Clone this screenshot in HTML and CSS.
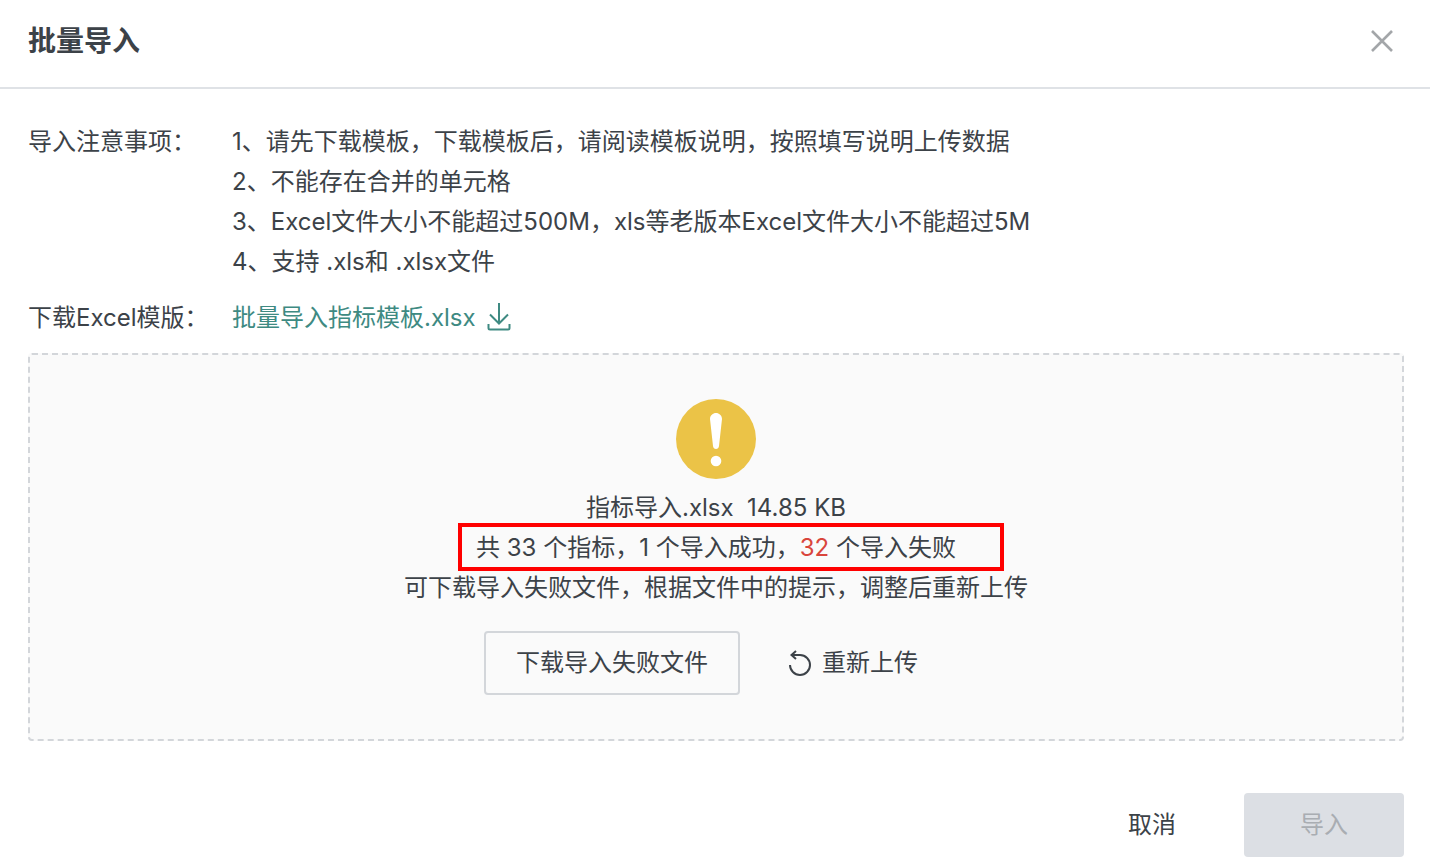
FILE: index.html
```html
<!DOCTYPE html>
<html>
<head>
  <title>批量导入</title>
  <meta charset="UTF-8">
  <link rel="stylesheet" href="styles.css">
</head>
<body>
  <div id="import-dialog">
    <div class="dialog-header">
      <h3>批量导入</h3>
      <svg class="close-icon" width="24" height="24" viewBox="0 0 24 24" fill="none" stroke="#a3a6a9" stroke-width="2.6">
        <path d="M2 2 L22 22 M22 2 L2 22"/>
      </svg>
    </div>

    <div class="dialog-body">
      <div class="info-row notes">
        <div class="info-label">导入注意事项：</div>
        <div class="info-value">
          <div>1、请先下载模板，下载模板后，请阅读模板说明，按照填写说明上传数据</div>
          <div>2、不能存在合并的单元格</div>
          <div>3、Excel文件大小不能超过500M，xls等老版本Excel文件大小不能超过5M</div>
          <div>4、支持 .xls和 .xlsx文件</div>
        </div>
      </div>
      <div class="info-row download">
        <div class="info-label">下载Excel模版：</div>
        <div class="info-value template-link">
          <span>批量导入指标模板.xlsx</span>
          <svg width="24" height="28" viewBox="0 0 24 28" fill="none" stroke="#3e8a82" stroke-width="2">
            <path d="M12 0 V20.5 M3 11.5 L12 20.5 L21 11.5"/>
            <path d="M1.5 21 V25 Q1.5 26.5 3 26.5 H21 Q22.5 26.5 22.5 25 V21"/>
          </svg>
        </div>
      </div>

      <div class="result-box">
        <svg class="warn-icon" width="80" height="80" viewBox="0 0 80 80">
          <circle cx="40" cy="40" r="40" fill="#ebc347"/>
          <path d="M34 20 C34 16.5 37 14 40 14 C43 14 46 16.5 46 20 L43 47 C42.8 49 41.6 50 40 50 C38.4 50 37.2 49 37 47 Z" fill="#fff"/>
          <circle cx="40" cy="62" r="5.3" fill="#fff"/>
        </svg>
        <div class="result-text">
          <div>指标导入.xlsx&nbsp;&nbsp;14.85 KB</div>
          <div class="summary">共 33 个指标，1 个导入成功，<span class="fail-count">32</span> 个导入失败<span class="red-frame"></span></div>
          <div>可下载导入失败文件，根据文件中的提示，调整后重新上传</div>
        </div>
        <div class="result-actions">
          <button class="btn-outline">下载导入失败文件</button>
          <div class="reupload">
            <svg width="24" height="26" viewBox="0 0 24 26" fill="none" stroke="#3c4248" stroke-width="2">
              <path d="M3.5 5 H12 A10 10 0 1 1 2 15"/>
              <path d="M8 1 L3.5 5 L8 9"/>
            </svg>
            <span>重新上传</span>
          </div>
        </div>
      </div>
    </div>

    <div class="dialog-footer">
      <button class="btn-cancel">取消</button>
      <button class="btn-import" disabled>导入</button>
    </div>
  </div>
</body>
</html>
```

FILE: styles.css
```css
:root {
  --text-primary: #3c4248;
  --border-color: #dfe2e6;
  --link-color: #3e8a82;
}

* {
  box-sizing: border-box;
}

body {
  margin: 0;
  font-family: Inter, "Noto Sans CJK SC", sans-serif;
  font-size: 24px;
  line-height: 40px;
  color: var(--text-primary);
  background: #fff;
}

#import-dialog {
  display: flex;
  flex-direction: column;
  height: 868px;
}

.dialog-header {
  display: flex;
  justify-content: space-between;
  align-items: center;
  height: 89px;
  padding: 0 36px 6px 28px;
  border-bottom: 2px solid var(--border-color);
}

h3 {
  margin: 0;
  font-size: 28px;
  font-weight: 700;
}

.dialog-body {
  padding: 33px 26px 0 28px;
}

.info-row {
  display: flex;
}

.info-label {
  width: 204px;
  flex-shrink: 0;
}

.download {
  margin-top: 16px;
}

.template-link {
  display: flex;
  align-items: center;
  gap: 11px;
  color: var(--link-color);
}

.template-link svg {
  margin-bottom: 2px;
}

.result-box {
  display: flex;
  flex-direction: column;
  align-items: center;
  height: 388px;
  margin-top: 15px;
  padding-top: 44px;
  background: #fafafa;
  border: 2px dashed #d3d6da;
  border-radius: 4px;
}

.warn-icon {
  display: block;
}

.result-text {
  margin-top: 9px;
  text-align: center;
}

.summary {
  position: relative;
}

.fail-count {
  color: #d9453c;
}

/* annotation over the summary line */
.red-frame {
  position: absolute;
  top: -5px;
  bottom: -3px;
  left: 54px;
  width: 546px;
  border: 4px solid #f00;
}

.result-actions {
  display: flex;
  align-items: center;
  gap: 48px;
  margin-top: 23px;
  margin-right: 30px;
}

button {
  font: inherit;
  color: inherit;
  height: 64px;
  border-radius: 4px;
}

.btn-outline {
  width: 256px;
  padding: 0;
  border: 2px solid #d3d6da;
  background: transparent;
}

.reupload {
  display: flex;
  align-items: center;
  gap: 10px;
}

.reupload svg {
  display: block;
}

.dialog-footer {
  display: flex;
  justify-content: flex-end;
  gap: 12px;
  margin-top: 52px;
  padding-right: 26px;
}

.btn-cancel {
  width: 160px;
  background: transparent;
  border: none;
}

.btn-import {
  width: 160px;
  background: #dcdfe4;
  border: none;
  color: #a9adb2;
}
```
